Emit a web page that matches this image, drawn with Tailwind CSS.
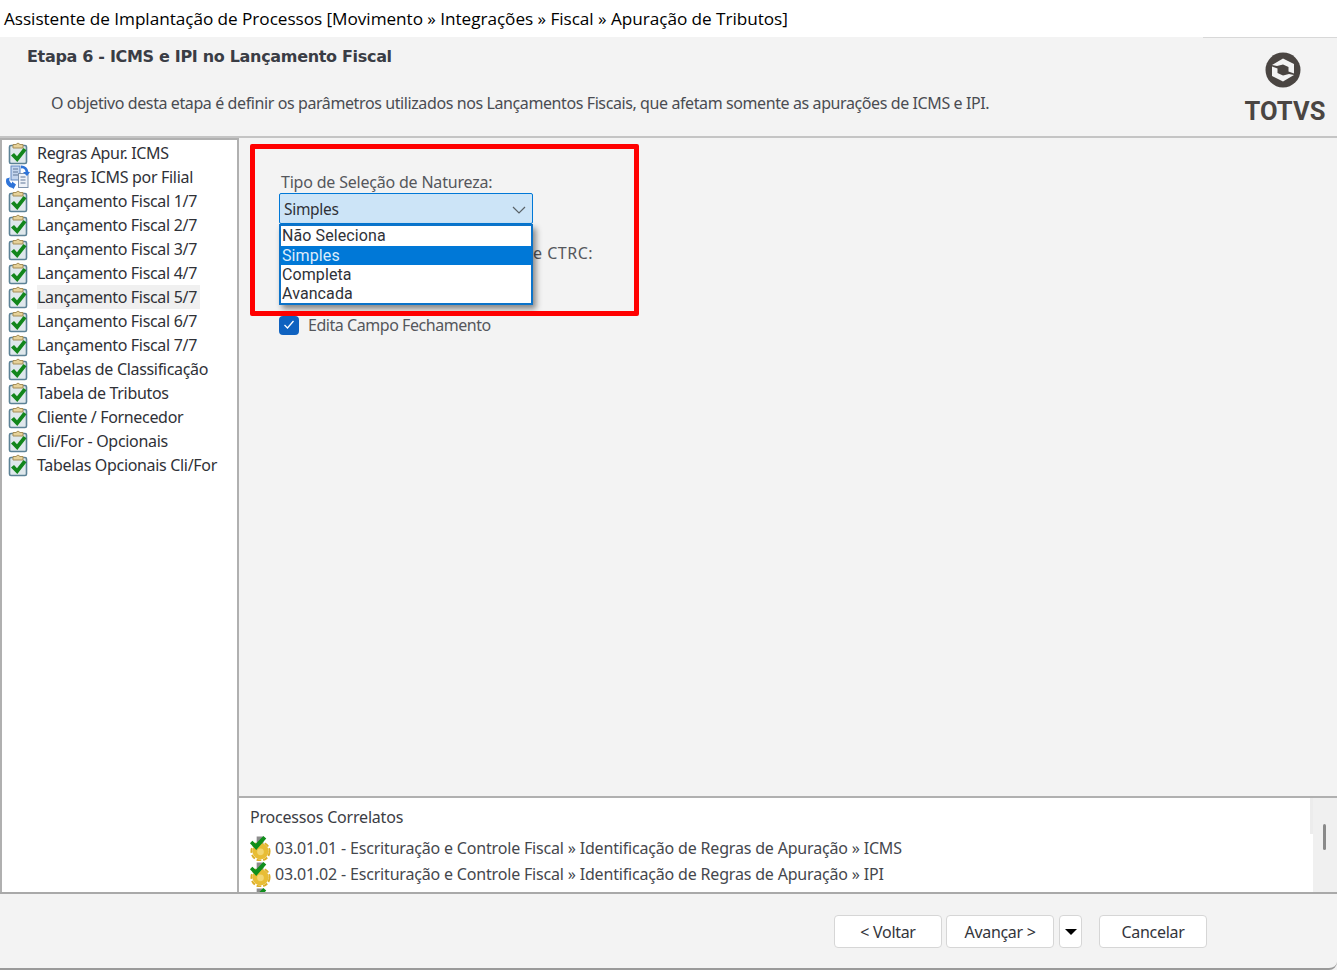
<!DOCTYPE html>
<html lang="pt-BR">
<head>
  <meta charset="UTF-8">
  <title>Assistente de Implantação de Processos</title>
  <script src="https://cdn.jsdelivr.net/npm/@tailwindcss/browser@4"></script>
</head>
<body class="w-[1337px] h-[970px] overflow-hidden bg-[#f3f3f3] font-['Noto_Sans','Open_Sans',sans-serif] text-[#2f3137] flex flex-col">
  <!-- icones reutilizados -->
  <svg class="hidden">
    <symbol id="chk" viewBox="0 0 22 24">
      <rect x="2.5" y="4.5" width="17" height="18" rx="1.5" fill="#dfe8ec" stroke="#5c8296" stroke-width="1.6"/>
      <path d="M6 7V3.5h3Q11 .5 13 3.5h3V7z" fill="#e6d29a" stroke="#a58e58" stroke-width="1"/>
      <path d="M4 14.5l3-2.5 3 3.2L16.5 7l3 2.3L10.3 21z" fill="#12861b"/>
    </symbol>
    <symbol id="sync" viewBox="0 0 24 24">
      <rect x="5" y="1" width="9" height="14" fill="#c4d5ee" stroke="#5f86c0"/>
      <rect x="12.500" y="8.500" width="9.500" height="14" fill="#eef2f8" stroke="#7f93ad"/>
      <path d="M7 4h5M7 7h5M7 10h5M14.500 12h5M14.500 15h5M14.500 18h5" stroke="#5f7698"/>
      <path d="M.5 13.500a7 7 0 0 0 6 9.500l1 1 2.500-4.500-4-3v2a4 4 0 0 1-2-6z" fill="#2f74d8"/>
      <path d="M15 .5a7 7 0 0 1 7.500 6.500l1.500 0-3 4-4-4h2.500a3.500 3.500 0 0 0-4.500-3.500z" fill="#2f74d8"/>
    </symbol>
    <symbol id="gear" viewBox="0 0 24 26">
      <rect x="8" y="1" width="7" height="12" fill="#8d8d8d"/>
      <circle cx="12" cy="16.500" r="8.500" fill="#e8bd35"/>
      <circle cx="12" cy="16.500" r="9.500" fill="none" stroke="#dcae28" stroke-width="2" stroke-dasharray="5 2"/>
      <circle cx="12" cy="17" r="3.500" fill="#f2d670"/>
      <path d="M1 8l2.500-2.500 3.500 3L15 .5l3 2.500-10.500 12z" fill="#0f8f1c"/>
    </symbol>
  </svg>

  <div class="h-[37px] shrink-0 bg-white pl-[4px] pt-[6px] text-[17.2px] leading-[26px] text-black whitespace-nowrap font-['Open_Sans',sans-serif] tracking-[-0.05px]">Assistente de Implantação de Processos [Movimento » Integrações » Fiscal » Apuração de Tributos]</div>

  <header class="h-[101px] shrink-0 border-b-2 border-[#c4c4c4] flex justify-between relative">
    <div class="pl-[27px] pt-[8px]">
      <h1 class="text-[16px] leading-6 font-bold tracking-[-0.32px] text-[#3a3d45] font-['DejaVu_Sans',sans-serif]">Etapa 6 - ICMS e IPI no Lançamento Fiscal</h1>
      <p class="mt-[22px] pl-[24px] text-[16px] leading-[24px] tracking-[-0.4px] text-[#4a4c52] whitespace-nowrap">O objetivo desta etapa é definir os parâmetros utilizados nos Lançamentos Fiscais, que afetam somente as apurações de ICMS e IPI.</p>
    </div>
    <div class="w-[134px] shrink-0 border-t border-[#d8d8d8] flex flex-col items-center pt-[14px] pl-[26px]">
      <svg width="36" height="36" viewBox="0 0 36 36" class="shrink-0">
        <circle cx="18" cy="18" r="17.500" fill="#4a4542"/>
        <path d="M7 13L18 6.500 29 12v9.500L23.500 19.500V15L18 12.500 12 14zM29 23L18 29.500 7 24v-9.500L12.500 16.500V21L18 23.500 24 22z" fill="#f3f3f3"/>
      </svg>
      <span class="mt-[7px] ml-[4px] text-[25.5px] leading-[32px] font-bold tracking-[0.1px] text-[#4a4542] font-['Roboto',sans-serif]">TOTVS</span>
    </div>
  </header>

  <div class="h-[756px] shrink-0 flex border-b-2 border-[#a9a9a9]">
    <nav class="w-[239px] shrink-0 bg-white border-x-2 border-t-2 border-[#b0b0b0] pl-[4px] pt-[1px] text-[16px] tracking-[-0.32px]">
      <ul class="flex flex-col">
        <li class="h-6 flex items-center gap-[7px]"><svg class="w-6 h-6 shrink-0"><use href="#chk"/></svg>Regras Apur. ICMS</li>
        <li class="h-6 flex items-center gap-[7px]"><svg class="w-6 h-6 shrink-0"><use href="#sync"/></svg>Regras ICMS por Filial</li>
        <li class="h-6 flex items-center gap-[7px]"><svg class="w-6 h-6 shrink-0"><use href="#chk"/></svg>Lançamento Fiscal 1/7</li>
        <li class="h-6 flex items-center gap-[7px]"><svg class="w-6 h-6 shrink-0"><use href="#chk"/></svg>Lançamento Fiscal 2/7</li>
        <li class="h-6 flex items-center gap-[7px]"><svg class="w-6 h-6 shrink-0"><use href="#chk"/></svg>Lançamento Fiscal 3/7</li>
        <li class="h-6 flex items-center gap-[7px]"><svg class="w-6 h-6 shrink-0"><use href="#chk"/></svg>Lançamento Fiscal 4/7</li>
        <li class="h-6 flex items-center gap-[7px]"><svg class="w-6 h-6 shrink-0"><use href="#chk"/></svg><span class="bg-[#f0f0f0] w-[163px] leading-6">Lançamento Fiscal 5/7</span></li>
        <li class="h-6 flex items-center gap-[7px]"><svg class="w-6 h-6 shrink-0"><use href="#chk"/></svg>Lançamento Fiscal 6/7</li>
        <li class="h-6 flex items-center gap-[7px]"><svg class="w-6 h-6 shrink-0"><use href="#chk"/></svg>Lançamento Fiscal 7/7</li>
        <li class="h-6 flex items-center gap-[7px]"><svg class="w-6 h-6 shrink-0"><use href="#chk"/></svg>Tabelas de Classificação</li>
        <li class="h-6 flex items-center gap-[7px]"><svg class="w-6 h-6 shrink-0"><use href="#chk"/></svg>Tabela de Tributos</li>
        <li class="h-6 flex items-center gap-[7px]"><svg class="w-6 h-6 shrink-0"><use href="#chk"/></svg>Cliente / Fornecedor</li>
        <li class="h-6 flex items-center gap-[7px]"><svg class="w-6 h-6 shrink-0"><use href="#chk"/></svg>Cli/For - Opcionais</li>
        <li class="h-6 flex items-center gap-[7px]"><svg class="w-6 h-6 shrink-0"><use href="#chk"/></svg>Tabelas Opcionais Cli/For</li>
      </ul>
    </nav>

    <div class="flex-1 flex flex-col min-w-0">
      <main class="flex-1 relative pl-[40px] pt-[32px] text-[16px] tracking-[-0.2px] text-[#55575c]">
        <label class="block ml-[2px] leading-6">Tipo de Seleção de Natureza:</label>
        <div class="mt-[-1px] w-[254px] h-[31px] bg-[#cce4f7] border border-[#0078d7] rounded-[2px] flex items-center justify-between pl-[4px] pr-[6px] pt-[2px] text-[15.5px] tracking-[-0.3px] text-[#2f3137]">
          <span>Simples</span>
          <svg width="14" height="8" viewBox="0 0 14 8"><path d="M1 1l6 6 6-6" fill="none" stroke="#5a6268" stroke-width="1.2"/></svg>
        </div>
        <label class="block ml-[254px] mt-[17px] leading-6 tracking-[0.5px]">e CTRC:</label>
        <label class="flex items-center gap-[9px] mt-[48px] leading-6 tracking-[-0.45px]"><span class="w-[20px] h-[19px] rounded-[4px] bg-[#0f62c0] flex items-center justify-center"><svg width="12" height="10" viewBox="0 0 12 10"><path d="M1.500 5l3 3 6-7" fill="none" stroke="#fff" stroke-width="1.3"/></svg></span>Edita Campo Fechamento</label>

        <ul class="absolute left-[40px] top-[86px] w-[254px] h-[81px] bg-white border-2 border-[#0c73c9] shadow-[3px_4px_6px_rgba(0,0,0,0.45)] text-[16px] text-[#2f3137] font-['Roboto',sans-serif] tracking-[0.1px]">
          <li class="pl-[1px] h-[20px] leading-[20px]">Não Seleciona</li>
          <li class="pl-[1px] h-[19px] leading-[19px] bg-[#0078d7] text-[#dcecfb]">Simples</li>
          <li class="pl-[1px] h-[19px] leading-[20px]">Completa</li>
          <li class="pl-[1px] h-[19px] leading-[20px]">Avancada</li>
        </ul>
        <div class="absolute left-[11px] top-[6px] w-[389px] h-[172px] border-[5px] border-[#ff0000] rounded-[2px]"></div>
      </main>

      <section class="h-[96px] shrink-0 bg-white border-t-2 border-[#b0b0b0] flex overflow-hidden">
        <div class="flex-1 min-w-0 pl-[11px] pt-[7px] text-[16px] tracking-[-0.2px] overflow-hidden">
          <h2 class="leading-6 text-[#3b3d44]">Processos Correlatos</h2>
          <ul class="mt-[6px] text-[#45474d] tracking-[-0.18px]">
            <li class="h-[26px] flex items-center gap-[3px] whitespace-nowrap"><svg class="w-[23px] h-[26px] ml-[-1px] shrink-0"><use href="#gear"/></svg>03.01.01 - Escrituração e Controle Fiscal » Identificação de Regras de Apuração » ICMS</li>
            <li class="h-[26px] flex items-center gap-[3px] whitespace-nowrap"><svg class="w-[23px] h-[26px] ml-[-1px] shrink-0"><use href="#gear"/></svg>03.01.02 - Escrituração e Controle Fiscal » Identificação de Regras de Apuração » IPI</li>
            <li class="h-[26px] flex items-center"><svg class="w-[23px] h-[26px] ml-[-1px] shrink-0"><use href="#gear"/></svg></li>
          </ul>
        </div>
        <div class="w-[3px] h-[36px] bg-[#ececec] shrink-0"></div>
        <div class="w-[24px] shrink-0 bg-[#f0f0f0] pl-[10px] pt-[26px]"><div class="w-[3px] h-[26px] bg-[#8a8a8a] rounded-sm"></div></div>
      </section>
    </div>
  </div>

  <footer class="flex-1 border-b-2 border-[#9a9a9a] rounded-br-[8px] flex pl-[834px] pt-[21px] text-[16px] tracking-[-0.3px] text-[#33353b]">
    <button class="w-[108px] h-[33px] pt-[1px] bg-white border border-[#d6d6d6] rounded-[4px]">&lt; Voltar</button>
    <button class="ml-[4px] w-[108px] h-[33px] pt-[1px] bg-white border border-[#d6d6d6] rounded-[4px]">Avançar &gt;</button>
    <button class="ml-[5px] w-[23px] h-[33px] bg-white border border-[#d6d6d6] rounded-[4px] flex items-center justify-center"><svg width="12" height="6" viewBox="0 0 12 6"><path d="M0 0h12L6 6z" fill="#000"/></svg></button>
    <button class="ml-[17px] w-[108px] h-[33px] pt-[1px] bg-white border border-[#d6d6d6] rounded-[4px]">Cancelar</button>
  </footer>
</body>
</html>
